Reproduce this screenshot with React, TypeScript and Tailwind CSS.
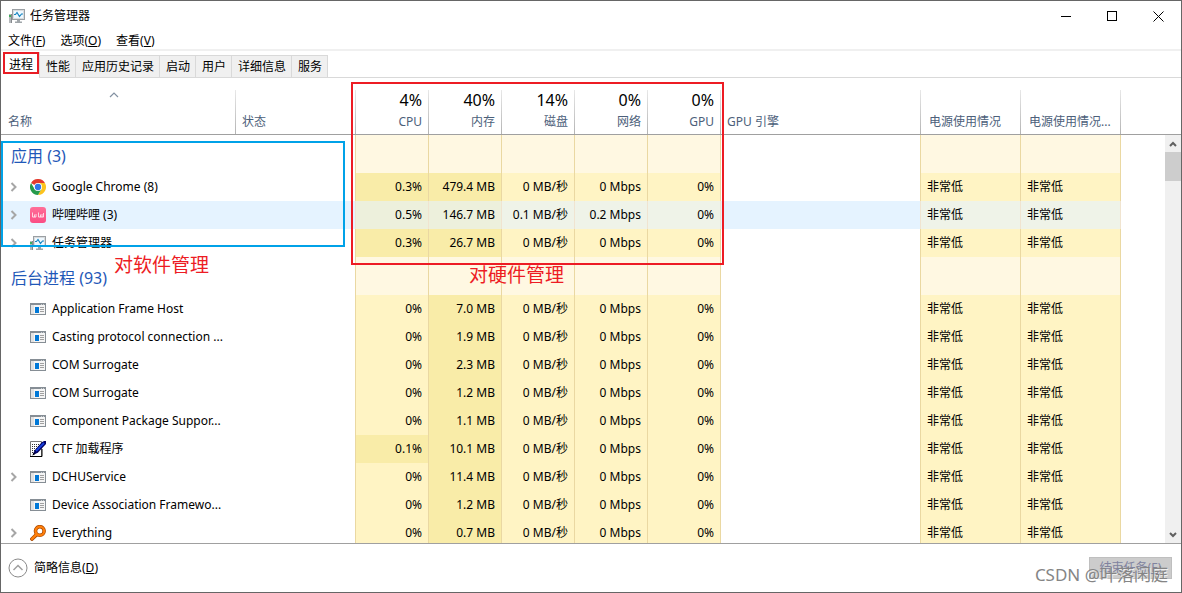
import React from "react";

type IconName = "chrome" | "bili" | "monitor" | "window" | "pen" | "search";

interface Process {
  name: string;
  icon: IconName;
  expandable?: boolean;
  selected?: boolean;
  cpu: string;
  memory: string;
  disk: string;
  network: string;
}

const apps: Process[] = [
  { name: "Google Chrome (8)", icon: "chrome", expandable: true, cpu: "0.3%", memory: "479.4 MB", disk: "0 MB/秒", network: "0 Mbps" },
  { name: "哔哩哔哩 (3)", icon: "bili", expandable: true, selected: true, cpu: "0.5%", memory: "146.7 MB", disk: "0.1 MB/秒", network: "0.2 Mbps" },
  { name: "任务管理器", icon: "monitor", expandable: true, cpu: "0.3%", memory: "26.7 MB", disk: "0 MB/秒", network: "0 Mbps" },
];

const idle = { cpu: "0%", disk: "0 MB/秒", network: "0 Mbps" };

const background: Process[] = [
  { ...idle, name: "Application Frame Host", icon: "window", memory: "7.0 MB" },
  { ...idle, name: "Casting protocol connection ...", icon: "window", memory: "1.9 MB" },
  { ...idle, name: "COM Surrogate", icon: "window", memory: "2.3 MB" },
  { ...idle, name: "COM Surrogate", icon: "window", memory: "1.2 MB" },
  { ...idle, name: "Component Package Suppor...", icon: "window", memory: "1.1 MB" },
  { ...idle, name: "CTF 加载程序", icon: "pen", cpu: "0.1%", memory: "10.1 MB" },
  { ...idle, name: "DCHUService", icon: "window", expandable: true, memory: "11.4 MB" },
  { ...idle, name: "Device Association Framewo...", icon: "window", memory: "1.2 MB" },
  { ...idle, name: "Everything", icon: "search", expandable: true, memory: "0.7 MB" },
];

const tabs = ["性能", "应用历史记录", "启动", "用户", "详细信息", "服务"];
const menus = [
  { label: "文件", hotkey: "F" },
  { label: "选项", hotkey: "O" },
  { label: "查看", hotkey: "V" },
];
const meters = [
  { value: "4%", label: "CPU" },
  { value: "40%", label: "内存" },
  { value: "14%", label: "磁盘" },
  { value: "0%", label: "网络" },
  { value: "0%", label: "GPU" },
];

function MonitorIcon() {
  return (
    <svg viewBox="0 0 16 16" className="size-4 shrink-0" aria-hidden="true">
      <path d="M0 6h3v9H0z" fill="#b4b8bb" />
      <path d="M2 6h1v9H2z" fill="#85898d" />
      <path d="M0 7h2v2H0z" fill="#3fae5a" />
      <rect x="3.500" y="1.500" width="12" height="10" fill="#d9dcde" stroke="#9a9fa3" />
      <rect x="5" y="3" width="9" height="7" fill="#eef8ff" />
      <path d="M5 6.500h1.500L8 4.500l2.500 4L12.500 6H14" fill="none" stroke="#1785c1" strokeWidth="1.200" />
      <path d="M8 12h3v1.500h2V15H6v-1.500h2z" fill="#a0a6aa" />
    </svg>
  );
}

function Icon({ name }: { name: IconName }) {
  switch (name) {
    case "chrome":
      return (
        <svg viewBox="0 0 48 48" className="size-4 shrink-0" aria-hidden="true">
          <path d="M24 24 3.200 12A24 24 0 0 1 44.800 12H24z" fill="#e33b2e" />
          <path d="M24 12h20.800A24 24 0 0 1 24 48l10.400-18z" fill="#fcc31e" />
          <path d="M3.200 12A24 24 0 0 0 24 48l10.400-18L24 34 13.600 30z" fill="#269a4b" />
          <circle cx="24" cy="24" r="12" fill="#fff" />
          <circle cx="24" cy="24" r="9.500" fill="#3076e8" />
        </svg>
      );
    case "bili":
      return (
        <svg viewBox="0 0 16 16" className="size-4 shrink-0" aria-hidden="true">
          <defs>
            <linearGradient id="bili-pink" x1="0" y1="0" x2="0" y2="1">
              <stop offset="0" stopColor="#ff6f98" />
              <stop offset="1" stopColor="#fb4d84" />
            </linearGradient>
          </defs>
          <rect width="16" height="16" rx="3" fill="url(#bili-pink)" />
          <path d="M2.500 5.500v4.500M4.500 7.500v2.500M6 7v3M8.500 5.500v4.500M10.500 7.500v2.500M12 7v3M13.500 6v4" fill="none" stroke="#ffe1ea" strokeWidth="0.900" />
          <path d="M2.500 10h3.500M8.500 10h5" stroke="#ffe1ea" strokeWidth="1.200" />
        </svg>
      );
    case "monitor":
      return <MonitorIcon />;
    case "window":
      return (
        <svg viewBox="0 0 16 16" className="size-4 shrink-0" aria-hidden="true" shapeRendering="crispEdges">
          <rect y="2" width="16" height="12" fill="#868e95" />
          <rect x="1" y="4" width="14" height="9" fill="#f5f5f5" />
          <rect x="1" y="4" width="3" height="9" fill="#e2e2e2" />
          <rect x="5" y="6" width="4" height="6" fill="#0078d7" />
          <path d="M10 6h4v1h-4zM10 8h4v1h-4zM10 10h4v1h-4z" fill="#a0a0a0" />
          <path d="M11 3h1v1h-1zM13 3h1v1h-1z" fill="#c8ccd0" />
        </svg>
      );
    case "pen":
      return (
        <svg viewBox="0 0 16 16" className="size-4 shrink-0" aria-hidden="true">
          <path d="M.5.5h11v15H.5z" fill="#fff" stroke="#777" />
          <path d="M0 15.500h12V8" fill="none" stroke="#000" />
          <path d="M2 3.500h8M2 5.500h7M2 7.500h6M2 9.500h4M2 11.500h2" stroke="#333" strokeDasharray="1 1" />
          <path d="M2.500 14.500 4.500 9.500 11.500 1.500 14 0h2v3L8 11.500z" fill="#000060" />
          <path d="M6 10 14 2" stroke="#1740df" strokeWidth="1.800" />
          <path d="m2.500 14.500 2.500-1.500-1.500-1.500z" fill="#000" />
        </svg>
      );
    case "search":
      return (
        <svg viewBox="0 0 16 16" className="size-4 shrink-0" aria-hidden="true">
          <circle cx="9.800" cy="6" r="4.300" fill="none" stroke="#a84800" strokeWidth="3.600" />
          <path d="M6.300 9.800 2 14" stroke="#a84800" strokeWidth="3.800" strokeLinecap="round" />
          <circle cx="9.800" cy="6" r="4.300" fill="none" stroke="#ff7f0a" strokeWidth="2.200" />
          <path d="M6.300 9.600 2 14" stroke="#ff7f0a" strokeWidth="2.400" strokeLinecap="round" />
        </svg>
      );
  }
}

function GroupRow({ label }: { label: string }) {
  const tinted = "border-r border-[#ead8a2] bg-[#fff8e2] p-0";
  return (
    <tr className="h-[38px]">
      <th scope="rowgroup" className="p-0 pt-1 pl-2.5 text-left text-base font-normal whitespace-nowrap text-[#1f58b8]">{label}</th>
      <td className="border-r border-[#ead8a2] p-0" />
      {meters.map((m) => <td key={m.label} className={tinted} />)}
      <td className="border-r border-[#ead8a2] p-0" />
      <td className={tinted} />
      <td className={tinted} />
      <td className="p-0" />
    </tr>
  );
}

function ProcessRow({ p }: { p: Process }) {
  const line = p.selected ? "border-[#f0e4d0]" : "border-[#ead8a2]";
  const low = p.selected ? "bg-[#eff3e8]" : "bg-[#fff4c4]";
  const high = p.selected ? "bg-[#edf0dc]" : "bg-[#f9eca8]";
  const plain = p.selected ? "bg-[#e5f3ff]" : "bg-white";
  const num = `border-r p-0 pr-1.5 text-right whitespace-nowrap ${line}`;
  return (
    <tr className="h-7">
      <th scope="row" className={`p-0 text-left font-normal whitespace-nowrap ${plain}`}>
        <div className="flex items-center pl-[7px]">
          {p.expandable ? (
            <button type="button" aria-label={`展开 ${p.name}`} className="mr-2.5 size-3 text-[#a6a6a6]">
              <svg viewBox="0 0 12 12" className="size-3" aria-hidden="true">
                <path d="m3.500 2 4 4-4 4" fill="none" stroke="currentColor" strokeWidth="2" />
              </svg>
            </button>
          ) : (
            <span className="mr-2.5 size-3" />
          )}
          <Icon name={p.icon} />
          <span className="ml-1.5">{p.name}</span>
        </div>
      </th>
      <td className={`border-r p-0 ${line} ${plain}`} />
      <td className={`${num} ${p.cpu === "0%" ? low : high}`}>{p.cpu}</td>
      <td className={`${num} ${high}`}>{p.memory}</td>
      <td className={`${num} ${low}`}>{p.disk}</td>
      <td className={`${num} ${low}`}>{p.network}</td>
      <td className={`${num} ${low}`}>0%</td>
      <td className={`border-r p-0 ${line} ${plain}`} />
      <td className={`border-r p-0 pl-1.5 ${line} ${low}`}>非常低</td>
      <td className={`border-r p-0 pl-1.5 ${line} ${low}`}>非常低</td>
      <td className="p-0" />
    </tr>
  );
}

function HeadCell({ children, line = true, className = "" }: { children?: React.ReactNode; line?: boolean; className?: string }) {
  return (
    <th scope="col" className="border-b border-[#a0a0a0] p-0 align-bottom font-normal">
      <div className="flex h-11 items-stretch">
        <div className={`flex min-w-0 flex-1 flex-col justify-end pb-1 whitespace-nowrap ${className}`}>{children}</div>
        {line && <div className="w-px bg-linear-to-b from-[#e8e8e8] to-[#b4b4b4]" />}
      </div>
    </th>
  );
}

export default function App() {
  return (
    <div className="relative flex h-screen flex-col overflow-hidden border border-[#666666] bg-white font-['Noto_Sans','Noto_Sans_CJK_SC',sans-serif] text-xs text-black">
      <header className="flex h-[30px] shrink-0 items-center pl-2">
        <MonitorIcon />
        <h1 className="ml-[5px] flex-1">任务管理器</h1>
        <button type="button" aria-label="最小化" className="flex h-full w-[46px] items-center justify-center">
          <svg viewBox="0 0 11 11" className="size-[11px]" shapeRendering="crispEdges"><path d="M0 5.500h10" stroke="#000" /></svg>
        </button>
        <button type="button" aria-label="最大化" className="flex h-full w-[46px] items-center justify-center">
          <svg viewBox="0 0 11 11" className="size-[11px]" shapeRendering="crispEdges"><path d="M.5.5h9v9h-9z" fill="none" stroke="#000" /></svg>
        </button>
        <button type="button" aria-label="关闭" className="flex h-full w-[46px] items-center justify-center">
          <svg viewBox="0 0 11 11" className="size-[11px]"><path d="m.5.5 10 10M10.500.5l-10 10" stroke="#000" /></svg>
        </button>
      </header>

      <nav aria-label="菜单" className="flex h-5 shrink-0 items-end gap-[15px] border-b-2 border-[#f0f0f0] pl-[7px]">
        {menus.map((m) => (
          <button key={m.label} type="button" className="whitespace-nowrap">
            {m.label}(<u>{m.hotkey}</u>)
          </button>
        ))}
      </nav>

      <div role="tablist" className="flex h-[27px] shrink-0 items-end border-b border-[#d9d9d9]">
        <button type="button" role="tab" aria-selected="true" className="relative -mb-px h-[26px] border-r border-[#d9d9d9] bg-white pr-1.5 pb-px pl-2">
          进程
          <span className="absolute top-0 left-0.5 h-[22px] w-9 border-2 border-[#e81c24]" />
        </button>
        {tabs.map((t) => (
          <button key={t} type="button" role="tab" aria-selected="false" className="h-[22px] border-t border-r border-[#d9d9d9] bg-[#f0f0f0] pr-[5px] pl-1.5 whitespace-nowrap">
            {t}
          </button>
        ))}
      </div>

      <main className="flex min-h-0 flex-1 overflow-hidden">
        <div className="min-w-0 flex-1 overflow-hidden">
          <table className="w-full table-fixed border-separate border-spacing-0">
            <colgroup>
              <col className="w-[235px]" />
              <col className="w-[120px]" />
              {meters.map((m) => <col key={m.label} className="w-[73px]" />)}
              <col className="w-[200px]" />
              <col className="w-[100px]" />
              <col className="w-[100px]" />
              <col />
            </colgroup>
            <thead className="text-[#4c607a]">
              <tr className="h-[57px]">
                <HeadCell className="pr-4 pl-[7px] text-left">
                  <svg viewBox="0 0 10 6" className="mx-auto mt-0.5 mb-auto h-1.5 w-2.5" aria-hidden="true">
                    <path d="m1 5 4-4 4 4" fill="none" stroke="#8391a2" strokeWidth="1.200" />
                  </svg>
                  名称
                </HeadCell>
                <HeadCell className="pl-1.5 text-left">状态</HeadCell>
                {meters.map((m) => (
                  <HeadCell key={m.label} className="pr-1.5 text-right">
                    <span className="pb-0.5 text-base leading-6 text-black">{m.value}</span>
                    <span>{m.label}</span>
                  </HeadCell>
                ))}
                <HeadCell className="pl-1.5 text-left">GPU 引擎</HeadCell>
                <HeadCell className="pl-2 text-left">电源使用情况</HeadCell>
                <HeadCell className="pl-2 text-left">电源使用情况...</HeadCell>
                <HeadCell line={false} />
              </tr>
            </thead>
            <tbody>
              <GroupRow label="应用 (3)" />
              {apps.map((p) => <ProcessRow key={p.name} p={p} />)}
            </tbody>
            <tbody>
              <GroupRow label="后台进程 (93)" />
              {background.map((p, i) => <ProcessRow key={i} p={p} />)}
            </tbody>
          </table>
        </div>
        <div className="flex w-4 shrink-0 flex-col">
          <div className="h-[57px] shrink-0 border-b border-[#a0a0a0]" />
          <div className="flex min-h-0 flex-1 flex-col bg-[#f0f0f0]">
            <button type="button" aria-label="向上滚动" className="flex h-[17px] items-center justify-center">
              <svg viewBox="0 0 8 6" className="h-1.5 w-2"><path d="m1 5 3-3 3 3" fill="none" stroke="#606060" strokeWidth="2" /></svg>
            </button>
            <div className="h-[29px] bg-[#cdcdcd]" />
            <div className="flex-1" />
            <button type="button" aria-label="向下滚动" className="flex h-[17px] items-center justify-center">
              <svg viewBox="0 0 8 6" className="h-1.5 w-2"><path d="m1 1 3 3 3-3" fill="none" stroke="#606060" strokeWidth="2" /></svg>
            </button>
          </div>
        </div>
      </main>

      <footer className="flex h-[49px] shrink-0 items-center justify-between border-t border-[#a0a0a0] pr-[9px] pl-[7px]">
        <button type="button" className="flex items-center gap-1.5">
          <svg viewBox="0 0 20 20" className="size-5" aria-hidden="true">
            <circle cx="10" cy="10" r="9" fill="none" stroke="#8a8a8a" />
            <path d="m5.500 12 4.500-4.500 4.500 4.500" fill="none" stroke="#a0a0a0" strokeWidth="1.500" />
          </svg>
          <span>简略信息(<u>D</u>)</span>
        </button>
        <button type="button" disabled className="h-[22px] w-[83px] border border-[#bfbfbf] bg-[#cccccc] text-[#8083a0]">
          结束任务(<u>E</u>)
        </button>
      </footer>

      <div className="pointer-events-none absolute top-[140px] left-0 h-[106px] w-[344px] border-2 border-[#00a2e8]" />
      <div className="pointer-events-none absolute top-[81px] left-[350px] h-[183px] w-[373px] border-2 border-[#ed1c24]" />
      <p className="pointer-events-none absolute top-[250px] left-[113px] text-[19px] leading-7 text-[#ed1c24]">对软件管理</p>
      <p className="pointer-events-none absolute top-[260px] left-[468px] text-[19px] leading-7 text-[#ed1c24]">对硬件管理</p>
      <p className="pointer-events-none absolute right-[13px] bottom-[5px] text-[17px] leading-6 text-[#858585] [text-shadow:1px_1px_0_#ffffffb0]">CSDN @叶落闲庭</p>
    </div>
  );
}
